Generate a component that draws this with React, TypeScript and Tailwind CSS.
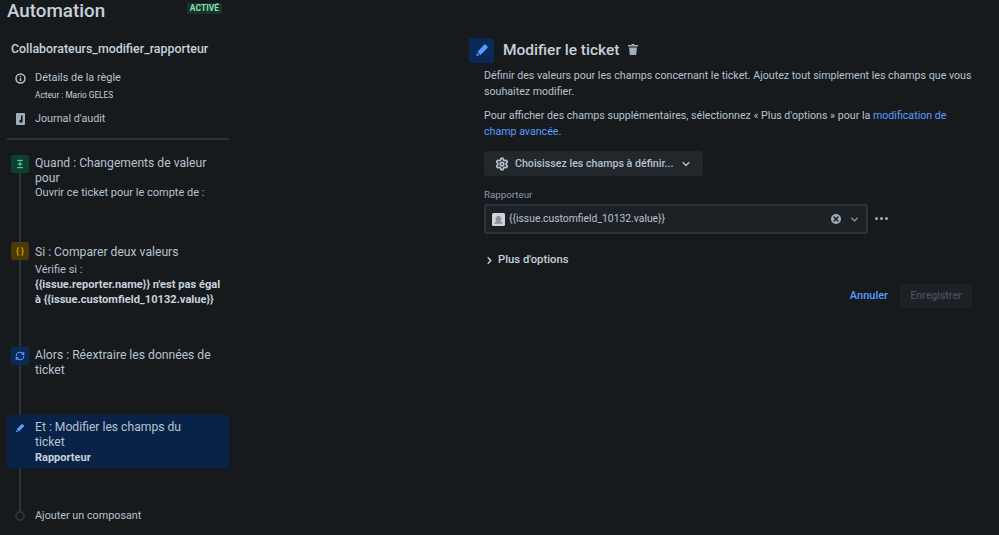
import { ChevronDown, ChevronRight, RefreshCw, Settings, X } from "lucide-react";

const font = { fontFamily: "Roboto, sans-serif" };

function StepIcon({ bg, children }: { bg: string; children: React.ReactNode }) {
  return <div className={`flex size-[18px] shrink-0 items-center justify-center rounded-[2px] ${bg}`}>{children}</div>;
}

function PencilIcon({ className }: { className: string }) {
  return (
    <svg viewBox="0 0 16 16" className={className} fill="currentColor">
      <path d="M10.4 1.9a1.3 1.3 0 0 1 1.8 0l2 2a1.3 1.3 0 0 1 0 1.8L6.2 13.6 2.9 10.1z" />
      <path d="M2.3 11l2.9 3-3.6.9z" />
    </svg>
  );
}

export default function App() {
  return (
    <div className="flex h-[535px] w-[999px] overflow-hidden bg-[#161a1d] text-[#b6c2cf]" style={font}>
      <aside className="ml-[7px] w-[222px] shrink-0">
        <div className="flex h-[28px] items-start justify-between pr-[7px]">
          <h1 className="text-[18.8px] leading-[22px] font-medium text-[#c7d1db]">Automation</h1>
          <span className="mt-[3px] rounded-[2px] bg-[#1c3329] px-[3px] text-[8.5px] leading-[11px] font-bold text-[#7ee2b8]">ACTIVÉ</span>
        </div>
        <div className="mt-[13px] pl-[4px] text-[12.4px] leading-[16px] font-medium text-[#c7d1db]">Collaborateurs_modifier_rapporteur</div>
        <div className="mt-[13px] flex gap-[9px] pl-[8px]">
          <svg viewBox="0 0 12 12" className="mt-[3px] size-[11px] shrink-0 text-[#b6c2cf]" fill="none" stroke="currentColor">
            <circle cx="6" cy="6" r="4.9" strokeWidth="1.6" />
            <path d="M6 5.4v3.2M6 3.2v1.2" strokeWidth="1.6" />
          </svg>
          <div>
            <div className="text-[10.9px] leading-[16px]">Détails de la règle</div>
            <div className="mt-[2px] text-[8.3px] leading-[14px] text-[#c7d1db]">Acteur : Mario GELES</div>
          </div>
        </div>
        <div className="mt-[9px] flex gap-[10px] pl-[9px]">
          <svg viewBox="0 0 9 12" className="mt-[2px] h-[12px] w-[9px] shrink-0">
            <rect width="9" height="12" rx="1" fill="#9fadbc" />
            <path d="M5 2.5h1.6v5.5a1.6 1.6 0 1 1-1.6-1.5z" fill="#161a1d" />
          </svg>
          <div className="text-[10.75px] leading-[16px]">Journal d'audit</div>
        </div>
        <div className="mt-[11px] h-[2px] bg-[#2c333a]" />

        <div className="relative mt-[15px]">
          <div className="absolute top-[10px] left-[12px] h-[350px] w-[2px] bg-[#2c333a]" />
          <div className="relative flex h-[87px] gap-[6px] pl-[4px]">
            <StepIcon bg="bg-[#0f3f2e]">
              <svg viewBox="0 0 12 12" className="size-[10px] text-[#4bce97]" fill="currentColor">
                <rect x="2.5" y="1" width="7" height="1.4" />
                <rect x="2.5" y="9.6" width="7" height="1.4" />
                <path d="M5.2 3h1.6v2.4H9L6 8.4 3 5.4h2.2z" />
              </svg>
            </StepIcon>
            <div className="w-[180px] pt-[1px]">
              <div className="text-[12.15px] leading-[15px]">Quand : Changements de valeur pour</div>
              <div className="-mt-[1px] text-[11px] leading-[15px]">Ouvrir ce ticket pour le compte de :</div>
            </div>
          </div>
          <div className="relative flex h-[105px] gap-[6px] pl-[4px]">
            <StepIcon bg="bg-[#4a3a05]">
              <span className="text-[9px] leading-none font-bold text-[#cf9f02]">{"{ }"}</span>
            </StepIcon>
            <div className="w-[192px] pt-[3px]">
              <div className="text-[12.15px] leading-[15px]">Si : Comparer deux valeurs</div>
              <div className="mt-[2px] text-[11px] leading-[15px]">Vérifie si :</div>
              <div className="text-[11.1px] leading-[15px] font-bold text-[#c7d1db]">{"{{issue.reporter.name}} n'est pas égal à {{issue.customfield_10132.value}}"}</div>
            </div>
          </div>
          <div className="relative flex h-[68px] gap-[6px] pl-[4px]">
            <StepIcon bg="bg-[#092957]">
              <RefreshCw className="size-[10px] text-[#579dff]" strokeWidth={2.5} />
            </StepIcon>
            <div className="w-[180px] pt-[1px]">
              <div className="text-[12.15px] leading-[15px]">Alors : Réextraire les données de ticket</div>
            </div>
          </div>
          <div className="relative flex h-[53px] gap-[6px] rounded-[3px] bg-[#092348] pl-[4px] pt-[4px]">
            <StepIcon bg="bg-transparent">
              <PencilIcon className="size-[10px] text-[#579dff]" />
            </StepIcon>
            <div className="w-[165px] pt-[1px]">
              <div className="text-[12.15px] leading-[15px]">Et : Modifier les champs du ticket</div>
              <div className="text-[11px] leading-[15px] font-bold text-[#c7d1db]">Rapporteur</div>
            </div>
          </div>
          <div className="relative mt-[40px] flex items-center gap-[10px] pl-[8px]">
            <div className="size-[10px] shrink-0 rounded-full border-2 border-[#2c333a] bg-[#161a1d]" />
            <div className="text-[10.8px] leading-[15px]">Ajouter un composant</div>
          </div>
        </div>
      </aside>

      <main className="ml-[240px] w-[505px] pt-[37px]">
        <div className="flex items-center">
          <div className="flex size-[25px] items-center justify-center rounded-[3px] bg-[#092957]">
            <PencilIcon className="size-[14px] text-[#579dff]" />
          </div>
          <h2 className="mt-[1px] ml-[9px] text-[15.5px] leading-[25px] font-medium text-[#c7d1db]">Modifier le ticket</h2>
          <svg viewBox="0 0 10 11" className="mb-[1px] ml-[9px] h-[11px] w-[10px] text-[#9fadbc]" fill="currentColor">
            <path d="M3.5 0h3v1H10v1.5H0V1h3.5z" />
            <path d="M1 3.5h8l-.8 7.5H1.8z" />
          </svg>
        </div>
        <div className="pl-[15px]">
          <p className="mt-[5px] text-[10.65px] leading-[16px]">Définir des valeurs pour les champs concernant le ticket. Ajoutez tout simplement les champs que vous souhaitez modifier.</p>
          <p className="mt-[8px] text-[10.65px] leading-[16px]">
            Pour afficher des champs supplémentaires, sélectionnez « Plus d'options » pour la <span className="text-[#579dff]">modification de champ avancée</span>.
          </p>
          <button className="mt-[11px] flex h-[25px] w-[219px] items-center gap-[6px] rounded-[3px] bg-[#22272b] pl-[11px] text-[10.65px] font-medium whitespace-nowrap text-[#b6c2cf]">
            <Settings className="size-[14px] shrink-0 text-[#b6c2cf]" strokeWidth={3} />
            Choisissez les champs à définir...
            <ChevronDown className="ml-[1px] size-[12px] shrink-0" strokeWidth={2.5} />
          </button>
          <div className="mt-[12px] text-[9.75px] leading-[14px] text-[#8c9bab]">Rapporteur</div>
          <div className="mt-[2px] flex items-center">
            <div className="flex h-[30px] w-[384px] items-center rounded-[3px] border-2 border-[#2c333a] bg-[#1d2125] pl-[6px] pr-[6px]">
              <svg viewBox="0 0 12 12" className="size-[13px] shrink-0">
                <rect width="12" height="12" rx="1.5" fill="#d0d4d9" />
                <path d="M2.5 10V8.5L4.5 7.5A2.6 2.6 0 1 1 7.5 7.5L9.5 8.5V10z" fill="#8c9299" />
              </svg>
              <span className="ml-[4px] text-[10.35px] text-[#b6c2cf]">{"{{issue.customfield_10132.value}}"}</span>
              <div className="ml-auto flex size-[10px] items-center justify-center rounded-full bg-[#9fadbc]">
                <X className="size-[8px] text-[#161a1d]" strokeWidth={4} />
              </div>
              <ChevronDown className="ml-[8px] size-[11px] text-[#9fadbc]" strokeWidth={2.5} />
            </div>
            <div className="mb-[1px] ml-[7px] flex gap-[2px]">
              <div className="size-[3px] rounded-full bg-[#9fadbc]" />
              <div className="size-[3px] rounded-full bg-[#9fadbc]" />
              <div className="size-[3px] rounded-full bg-[#9fadbc]" />
            </div>
          </div>
          <div className="mt-[18px] flex items-center gap-[3px] text-[11.25px] leading-[16px] font-medium text-[#c7d1db]">
            <ChevronRight className="size-[11px]" strokeWidth={3} />
            Plus d'options
          </div>
          <div className="mt-[16px] flex items-center justify-end gap-[12px] pr-[2px]">
            <span className="text-[11px] font-medium text-[#579dff]">Annuler</span>
            <div className="flex h-[24px] w-[72px] items-center justify-center rounded-[3px] bg-[#1d2125] text-[10.5px] font-medium text-[#454f59]">Enregistrer</div>
          </div>
        </div>
      </main>
    </div>
  );
}
